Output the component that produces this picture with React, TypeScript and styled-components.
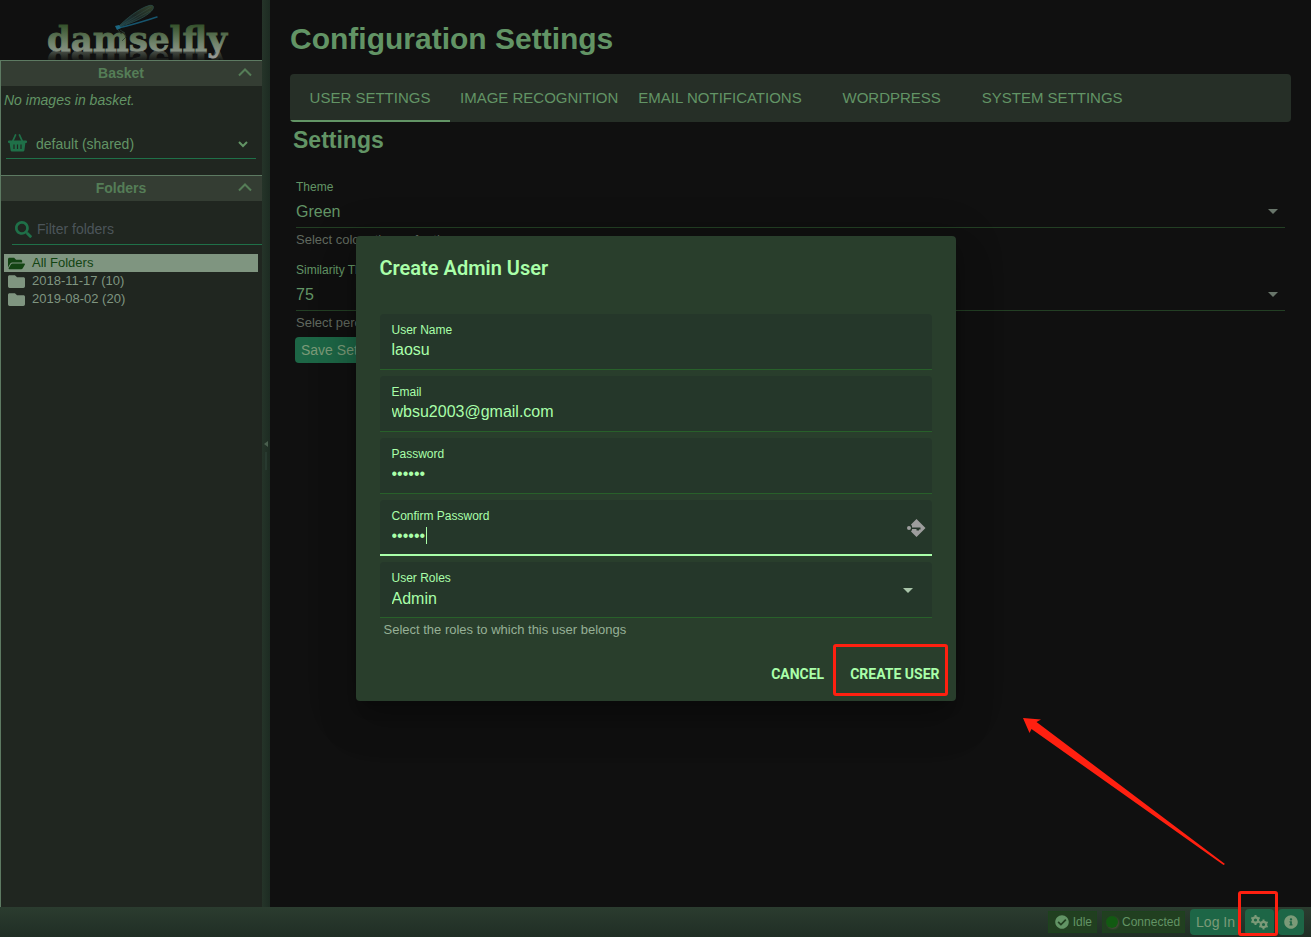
import React from "react";
import styled, { createGlobalStyle, css } from "styled-components";
import { FaSearch, FaFolder, FaFolderOpen, FaCheckCircle, FaInfoCircle } from "react-icons/fa";

const color = {
  page: "#101010",
  panel: "#202620",
  panelHeader: "#343d33",
  panelEdge: "#5d7a62",
  dimText: "#629465",
  teal: "#1f7048",
  bright: "#a9ffa9",
  dialog: "#293e2c",
  field: "#25372a",
  mark: "#ff2010",
};

const GlobalStyle = createGlobalStyle`
  *, *::before, *::after { box-sizing: border-box; }
  body {
    margin: 0;
    background: ${color.page};
    color: ${color.dimText};
    font: 14px/20px "Liberation Sans", Arial, sans-serif;
  }
  button, input, select { font: inherit; color: inherit; margin: 0; }
`;

const Shell = styled.div`
  position: relative;
  display: flex;
  flex-direction: column;
  min-height: 100vh;
`;

const Body = styled.div`
  display: flex;
  flex: 1;
`;

const Sidebar = styled.aside`
  display: flex;
  flex-direction: column;
  width: 262px;
  flex: none;
`;

const LogoLink = styled.a`
  display: block;
  height: 60px;
  overflow: hidden;
  svg { display: block; }
`;

const Panels = styled.div`
  flex: 1;
  background: ${color.panel};
  border-left: 1px solid ${color.panelEdge};
`;

const PanelHeader = styled.button`
  display: grid;
  grid-template-columns: 3px 1fr 24px;
  align-items: center;
  width: 100%;
  height: 26px;
  padding: 0 0 2px;
  border: 0;
  border-top: 1px solid ${color.panelEdge};
  background: ${color.panelHeader};
  color: #557d57;
  font-weight: bold;
`;

const EmptyNote = styled.p`
  margin: 0;
  padding: 4px 3px;
  font-style: italic;
`;

const BasketPicker = styled.label`
  display: flex;
  align-items: center;
  gap: 9px;
  height: 30px;
  margin: 15px 6px 16px 5px;
  padding: 0 8px 0 2px;
  border-bottom: 1px solid ${color.teal};
  > svg:first-child { color: ${color.teal}; }
`;

const BareSelect = styled.select`
  appearance: none;
  flex: 1;
  min-width: 0;
  width: 100%;
  padding: 0;
  border: 0;
  outline: 0;
  background: transparent;
`;

const FilterBox = styled.label`
  display: flex;
  align-items: center;
  gap: 5px;
  height: 32px;
  margin: 12px 0 9px 11px;
  padding: 1px 3px 0;
  border-bottom: 1px solid ${color.teal};
  svg { color: ${color.teal}; flex: none; }
`;

const FilterInput = styled.input`
  flex: 1;
  min-width: 0;
  padding: 0;
  border: 0;
  outline: 0;
  background: transparent;
  &::placeholder { color: #4c555a; opacity: 1; }
`;

const FolderList = styled.ul`
  list-style: none;
  margin: 0;
  padding: 0 4px 0 3px;
`;

const FolderItem = styled.li<{ $selected?: boolean }>`
  display: flex;
  align-items: center;
  gap: 7px;
  height: 18px;
  padding-left: 4px;
  font-size: 13px;
  color: #7f9580;
  ${(p) => p.$selected && css`background: #7f9580; color: #134413;`}
  svg { flex: none; }
`;

const Splitter = styled.div`
  display: flex;
  align-items: center;
  width: 8px;
  flex: none;
  background: linear-gradient(90deg, #253429, #1d2b22);
`;

const Main = styled.main`
  flex: 1;
  min-width: 0;
  padding: 18px 20px;
`;

const PageTitle = styled.h1`
  margin: 0 0 14px;
  font-size: 30px;
  line-height: 42px;
`;

const Tabs = styled.nav`
  display: flex;
  height: 48px;
  border-radius: 4px;
  background: #262f27;
  overflow: hidden;
`;

const Tab = styled.button<{ $active?: boolean }>`
  min-width: 160px;
  padding: 0 10px;
  border: 0;
  background: linear-gradient(${(p) => (p.$active ? color.dimText : "transparent")} 0 0) bottom / 100% 2px no-repeat;
  font-size: 15px;
  white-space: nowrap;
`;

const SectionTitle = styled.h2`
  margin: 0 0 22px;
  padding-left: 3px;
  font-size: 23px;
  line-height: 36px;
`;

const SettingList = styled.div`
  display: flex;
  flex-direction: column;
  gap: 16px;
  margin: 0 6px 7px;
`;

const SettingLabel = styled.label`
  display: block;
  font-size: 12px;
  line-height: 14px;
`;

const SettingControl = styled.div`
  display: flex;
  align-items: center;
  height: 34px;
  padding: 2px 7px 0 0;
  border-bottom: 1px solid #233f24;
  font-size: 16px;
  svg { color: #68756a; }
`;

const Hint = styled.p`
  margin: 0;
  padding-top: 5px;
  font-size: 13px;
  line-height: 14px;
  white-space: nowrap;
  color: #60695f;
`;

const TealButton = styled.button`
  display: inline-flex;
  align-items: center;
  justify-content: center;
  position: relative;
  height: 26px;
  padding: 0 6px;
  border: 0;
  border-radius: 4px;
  background: #1d6646;
  color: #7b9a78;
`;

const SaveButton = styled(TealButton)`
  margin-left: 5px;
`;

const StatusBar = styled.footer`
  display: flex;
  align-items: center;
  justify-content: flex-end;
  height: 30px;
  padding-right: 7px;
  background: linear-gradient(#2b3c2f, #202e25);
`;

const Badge = styled.span`
  display: flex;
  align-items: center;
  gap: 4px;
  height: 22px;
  margin-right: 5px;
  padding: 0 4px 0 6px;
  border: 1px solid #1d421d;
  background: #213f20;
  font-size: 12px;
`;

const Lamp = styled.span`
  width: 12px;
  height: 12px;
  margin-left: -3px;
  border-radius: 50%;
  background: #125a12;
  box-shadow: 1px 1px 2px #4a4a3c;
`;

const StatusButtons = styled.div`
  display: flex;
  gap: 4px;
`;

const Marker = styled.span<{ $inset: string }>`
  position: absolute;
  inset: ${(p) => p.$inset};
  border: 3px solid ${color.mark};
  border-radius: 3px;
  pointer-events: none;
`;

const Overlay = styled.div`
  position: absolute;
  inset: 0;
  display: flex;
  align-items: center;
  justify-content: center;
`;

const Dialog = styled.form`
  width: 600px;
  max-width: 100%;
  border-radius: 4px;
  background: ${color.dialog};
  color: ${color.bright};
  box-shadow: 0 11px 15px -7px rgba(0, 0, 0, 0.2), 0 24px 38px 3px rgba(0, 0, 0, 0.14),
    0 9px 46px 8px rgba(0, 0, 0, 0.12);
`;

const DialogTitle = styled.h2`
  margin: 0;
  padding: 16px 24px;
  font: 600 20px/32px Roboto, sans-serif;
`;

const Fields = styled.div`
  display: flex;
  flex-direction: column;
  gap: 6px;
  padding: 14px 24px 0;
`;

const Field = styled.div<{ $focused?: boolean }>`
  position: relative;
  display: flex;
  flex-direction: column;
  height: 56px;
  padding: 9px 12px 0;
  border-radius: 4px 4px 0 0;
  background: linear-gradient(${(p) => (p.$focused ? color.bright : "#28602a")} 0 0) bottom / 100%
    ${(p) => (p.$focused ? 2 : 1)}px no-repeat ${color.field};
`;

const FieldLabel = styled.label`
  font-size: 12px;
  line-height: 14px;
`;

const FieldInput = styled.input`
  height: 26px;
  padding: 0;
  border: 0;
  outline: 0;
  background: transparent;
  font-size: 16px;
`;

const RoleSelect = styled(BareSelect)`
  flex: none;
  height: 28px;
  font-size: 16px;
`;

const Caret = styled.span`
  position: absolute;
  left: 46px;
  top: 27px;
  width: 1px;
  height: 17px;
  background: ${color.bright};
`;

const FieldAdornment = styled.span<{ $right: number }>`
  position: absolute;
  right: ${(p) => p.$right}px;
  top: 0;
  bottom: 0;
  display: flex;
  align-items: center;
  pointer-events: none;
  color: #a9c5a9;
`;

const RoleHint = styled(Hint)`
  padding: 5px 28px 0;
  color: #96b096;
`;

const Actions = styled.div`
  display: flex;
  justify-content: flex-end;
  gap: 10px;
  padding: 19px 8px 9px;
`;

const ActionButton = styled.button`
  position: relative;
  height: 36px;
  padding: 0 8px;
  border: 0;
  background: transparent;
  font: 700 14px/24px Roboto, sans-serif;
`;

const ArrowMark = styled.svg`
  position: absolute;
  right: 85px;
  bottom: 71px;
  pointer-events: none;
`;

const DropArrow = () => (
  <svg width="10" height="5" viewBox="0 0 10 5" aria-hidden="true">
    <path d="M0 0h10L5 5z" fill="currentColor" />
  </svg>
);

const CollapseIcon = () => (
  <svg width="14" height="9" viewBox="0 0 14 9" aria-hidden="true">
    <path d="M1 7.500 7 1.500l6 6" fill="none" stroke="currentColor" strokeWidth="2" />
  </svg>
);

const OpenIcon = () => (
  <svg width="10" height="8" viewBox="0 0 10 8" aria-hidden="true">
    <path d="M1 2l4 4 4-4" fill="none" stroke="currentColor" strokeWidth="2" />
  </svg>
);

const BasketIcon = () => (
  <svg width="19" height="20" viewBox="0 0 19 20" aria-hidden="true">
    <path d="M7.500 1 4.800 7M11.500 1l2.700 6" stroke="currentColor" strokeWidth="1.800" strokeLinecap="round" />
    <path
      fill="currentColor"
      fillRule="evenodd"
      d="M1 6.500h17a1 1 0 0 1 0 2.500h-.6l-1 7.300a1.400 1.400 0 0 1-1.400 1.200H4a1.400 1.400 0 0 1-1.400-1.200L1.600 9H1a1 1 0 0 1 0-2.500zM5.400 10.500v4.500h1.200v-4.500zM8.900 10.500v4.500h1.200v-4.500zM12.400 10.500v4.500h1.200v-4.500z"
    />
  </svg>
);

const Gear = ({ x, y }: { x: number; y: number }) => (
  <g transform={`translate(${x} ${y})`} fill="none" stroke="currentColor">
    <circle r="2.700" strokeWidth="2.200" />
    <path
      strokeWidth="2"
      d="M0-3v-1.900M2.600-1.500l1.600-.9M2.600 1.500l1.600.9M0 3v1.900M-2.600 1.500l-1.600.9M-2.600-1.500l-1.600-.9"
    />
  </g>
);

const GearsIcon = () => (
  <svg width="17" height="15" viewBox="0 0 17 15" aria-hidden="true">
    <Gear x={4.5} y={5} />
    <Gear x={12.5} y={9.5} />
  </svg>
);

const Logo = () => (
  <svg width="262" height="60" viewBox="0 0 262 60" role="img" aria-label="damselfly">
    <defs>
      <linearGradient id="word" gradientUnits="userSpaceOnUse" x1="0" y1="22" x2="0" y2="58">
        <stop offset="0" stopColor="#2c4a22" />
        <stop offset="0.6" stopColor="#71846c" />
        <stop offset="1" stopColor="#999b98" />
      </linearGradient>
      <linearGradient id="fade" x1="0" y1="0" x2="0" y2="1">
        <stop offset="0" stopColor="#101010" stopOpacity="0.5" />
        <stop offset="1" stopColor="#101010" stopOpacity="0.9" />
      </linearGradient>
      <linearGradient id="wing" x1="0" y1="1" x2="1" y2="0">
        <stop offset="0" stopColor="#1a4450" />
        <stop offset="0.5" stopColor="#1c2826" />
        <stop offset="1" stopColor="#33422a" />
      </linearGradient>
      <clipPath id="below">
        <rect x="0" y="51" width="262" height="9" />
      </clipPath>
    </defs>
    <g clipPath="url(#below)">
      <use href="#wordmark" transform="matrix(1 0 0 -1 0 102)" />
      <rect x="0" y="51" width="262" height="9" fill="url(#fade)" />
    </g>
    <text
      id="wordmark"
      x="47"
      y="51"
      fill="url(#word)"
      stroke="url(#word)"
      strokeWidth="0.8"
      fontFamily="'DejaVu Serif', serif"
      fontWeight="bold"
      fontSize="34"
    >
      damselfly
    </text>
    <path d="M118 27C126 19 138 9 149 5.500c5-1 6 2 2 6-6 6-18 11-32 15.500z" fill="url(#wing)" stroke="#2a4a48" strokeWidth="0.800" />
    <path d="M120 26 151 7M126 24 150 11" stroke="#35504a" strokeWidth="0.500" fill="none" />
    <path d="M118 28c14-3 26-7 39-11" stroke="#17556e" strokeWidth="1.500" fill="none" strokeLinecap="round" />
    <path d="M115 26l4-1 2 3-4 2z" fill="#1b6680" />
    <path d="M118 30l3 4 3-2 2 5-4 4M120 30l5 3" stroke="#2a3a30" strokeWidth="0.800" fill="none" />
  </svg>
);

const PasswordKeyIcon = () => (
  <svg width="20" height="20" viewBox="0 0 20 20" aria-hidden="true">
    <path
      fill="#9d9d9d"
      fillRule="evenodd"
      d="M10.500 1 19.500 10l-9 9L5 13.500l1-1.500V8L5 6.500zM6 9.500V11h4.500v1.500H13V11.500h1.500v-2z"
    />
    <circle cx="3" cy="10" r="2" fill="#9d9d9d" />
  </svg>
);

const tabs = ["USER SETTINGS", "IMAGE RECOGNITION", "EMAIL NOTIFICATIONS", "WORDPRESS", "SYSTEM SETTINGS"];

const settings = [
  { id: "theme", label: "Theme", value: "Green", hint: "Select colour theme for the" },
  { id: "similarity", label: "Similarity Threshold", value: "75", hint: "Select percentage" },
];

const fields = [
  { id: "user-name", label: "User Name", type: "text", value: "laosu" },
  { id: "email", label: "Email", type: "email", value: "wbsu2003@gmail.com" },
  { id: "password", label: "Password", type: "password", value: "secret" },
  { id: "confirm", label: "Confirm Password", type: "password", value: "secret", focused: true },
];

const folders = ["2018-11-17 (10)", "2019-08-02 (20)"];

export default function App() {
  return (
    <>
      <GlobalStyle />
      <Shell>
        <Body>
          <Sidebar>
            <LogoLink href="#">
              <Logo />
            </LogoLink>
            <Panels>
              <PanelHeader type="button">
                <span />
                Basket
                <CollapseIcon />
              </PanelHeader>
              <EmptyNote>No images in basket.</EmptyNote>
              <BasketPicker>
                <BasketIcon />
                <BareSelect aria-label="Basket" defaultValue="default">
                  <option value="default">default (shared)</option>
                </BareSelect>
                <OpenIcon />
              </BasketPicker>
              <PanelHeader type="button">
                <span />
                Folders
                <CollapseIcon />
              </PanelHeader>
              <FilterBox>
                <FaSearch size={17} />
                <FilterInput type="text" placeholder="Filter folders" aria-label="Filter folders" />
              </FilterBox>
              <FolderList>
                <FolderItem $selected>
                  <FaFolderOpen size={17} />
                  All Folders
                </FolderItem>
                {folders.map((name) => (
                  <FolderItem key={name}>
                    <FaFolder size={17} />
                    {name}
                  </FolderItem>
                ))}
              </FolderList>
            </Panels>
          </Sidebar>
          <Splitter>
            <svg width="8" height="48" viewBox="0 0 8 48" aria-hidden="true">
              <path d="M6 11v6L2 14z" fill="#4a5f4e" />
              <path d="M4 22v18" stroke="#31443a" strokeWidth="1" />
            </svg>
          </Splitter>
          <Main>
            <PageTitle>Configuration Settings</PageTitle>
            <Tabs>
              {tabs.map((name, i) => (
                <Tab key={name} type="button" $active={i === 0}>
                  {name}
                </Tab>
              ))}
            </Tabs>
            <SectionTitle>Settings</SectionTitle>
            <SettingList>
              {settings.map((s) => (
                <div key={s.id}>
                  <SettingLabel htmlFor={s.id}>{s.label}</SettingLabel>
                  <SettingControl>
                    <BareSelect id={s.id} defaultValue={s.value}>
                      <option>{s.value}</option>
                    </BareSelect>
                    <DropArrow />
                  </SettingControl>
                  <Hint>{s.hint}</Hint>
                </div>
              ))}
            </SettingList>
            <SaveButton type="button">Save Settings</SaveButton>
          </Main>
        </Body>
        <StatusBar>
          <Badge>
            <FaCheckCircle size={14} />
            Idle
          </Badge>
          <Badge>
            <Lamp />
            Connected
          </Badge>
          <StatusButtons>
            <TealButton type="button">Log In</TealButton>
            <TealButton type="button" aria-label="Settings">
              <GearsIcon />
              <Marker $inset="-18px -4px -1px -7px" />
            </TealButton>
            <TealButton type="button" aria-label="About">
              <FaInfoCircle size={14} />
            </TealButton>
          </StatusButtons>
        </StatusBar>
        <Overlay>
          <Dialog role="dialog" aria-labelledby="dialog-title">
            <DialogTitle id="dialog-title">Create Admin User</DialogTitle>
            <Fields>
              {fields.map((f) => (
                <Field key={f.id} $focused={f.focused}>
                  <FieldLabel htmlFor={f.id}>{f.label}</FieldLabel>
                  <FieldInput id={f.id} type={f.type} defaultValue={f.value} />
                  {f.focused && (
                    <>
                      <Caret />
                      <FieldAdornment $right={6}>
                        <PasswordKeyIcon />
                      </FieldAdornment>
                    </>
                  )}
                </Field>
              ))}
              <Field>
                <FieldLabel htmlFor="roles">User Roles</FieldLabel>
                <RoleSelect id="roles" defaultValue="Admin">
                  <option>Admin</option>
                </RoleSelect>
                <FieldAdornment $right={19}>
                  <DropArrow />
                </FieldAdornment>
              </Field>
            </Fields>
            <RoleHint>Select the roles to which this user belongs</RoleHint>
            <Actions>
              <ActionButton type="button">CANCEL</ActionButton>
              <ActionButton type="submit">
                CREATE USER
                <Marker $inset="-12px 0 -4px -9px" />
              </ActionButton>
            </Actions>
          </Dialog>
        </Overlay>
        <ArrowMark width="204" height="149" viewBox="0 0 204 149" aria-hidden="true">
          <path d="M1 1 19 2.500 14.500 5 203 147 201.500 148 9.500 12 7.500 16z" fill={color.mark} />
        </ArrowMark>
      </Shell>
    </>
  );
}
